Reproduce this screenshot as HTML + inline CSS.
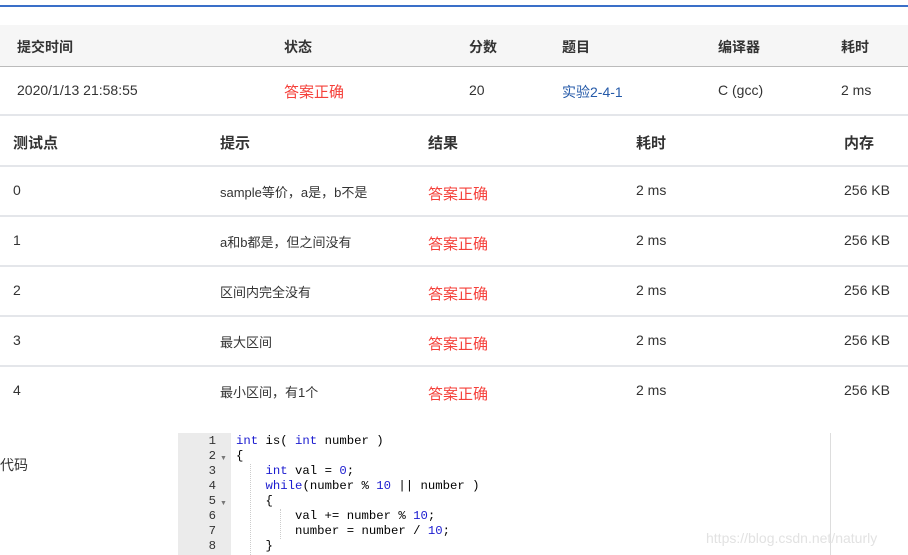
<!DOCTYPE html>
<html><head><meta charset="utf-8"><style>
body{margin:0;width:908px;height:555px;overflow:hidden;background:#fff;font-family:"Liberation Sans","Noto Sans CJK SC",sans-serif;color:#333;position:relative}
.a{position:absolute;white-space:nowrap}
.h{font-weight:bold;font-size:14px;color:#333}
.hl{position:absolute;left:0;width:908px;height:2px;background:#e4e6ea}
.r{color:#f5403a;font-size:15px}
.c{font-family:"Liberation Mono",monospace;font-size:12.3px;line-height:15px;white-space:pre}
.k{color:#1c1cd0}.n{color:#1c1cd0}
.g{position:absolute;width:0;border-left:1px dotted #ccc}
</style></head><body>
<div class="a" style="left:0;top:5px;width:908px;height:2px;background:#3a6fc8"></div>
<div class="a" style="left:0;top:25px;width:908px;height:41px;background:#f6f6f6;border-bottom:1px solid #bbb"></div>
<div class="a h" style="left:17px;top:37px">提交时间</div>
<div class="a h" style="left:284px;top:37px">状态</div>
<div class="a h" style="left:469px;top:37px">分数</div>
<div class="a h" style="left:562px;top:37px">题目</div>
<div class="a h" style="left:718px;top:37px">编译器</div>
<div class="a h" style="left:841px;top:37px">耗时</div>
<div class="a" style="left:17px;top:82px;font-size:14px">2020/1/13 21:58:55</div>
<div class="a r" style="left:284px;top:81px">答案正确</div>
<div class="a" style="left:469px;top:82px;font-size:14px">20</div>
<div class="a" style="left:562px;top:82px;font-size:14px;color:#2459a8">实验2-4-1</div>
<div class="a" style="left:718px;top:82px;font-size:14px">C (gcc)</div>
<div class="a" style="left:841px;top:82px;font-size:14px">2 ms</div>
<div class="hl" style="top:114px"></div>
<div class="a h" style="left:13px;top:132px;font-size:15px">测试点</div>
<div class="a h" style="left:220px;top:132px;font-size:15px">提示</div>
<div class="a h" style="left:428px;top:132px;font-size:15px">结果</div>
<div class="a h" style="left:636px;top:132px;font-size:15px">耗时</div>
<div class="a h" style="left:844px;top:132px;font-size:15px">内存</div>
<div class="hl" style="top:165px"></div>
<div class="hl" style="top:215px"></div>
<div class="hl" style="top:265px"></div>
<div class="hl" style="top:315px"></div>
<div class="hl" style="top:365px"></div>
<div class="a" style="left:13px;top:182px;font-size:14px">0</div><div class="a" style="left:220px;top:182px;font-size:13px">sample等价，a是，b不是</div><div class="a r" style="left:428px;top:183px">答案正确</div><div class="a" style="left:636px;top:182px;font-size:14px">2 ms</div><div class="a" style="left:844px;top:182px;font-size:14px">256 KB</div>
<div class="a" style="left:13px;top:232px;font-size:14px">1</div><div class="a" style="left:220px;top:232px;font-size:13px">a和b都是，但之间没有</div><div class="a r" style="left:428px;top:233px">答案正确</div><div class="a" style="left:636px;top:232px;font-size:14px">2 ms</div><div class="a" style="left:844px;top:232px;font-size:14px">256 KB</div>
<div class="a" style="left:13px;top:282px;font-size:14px">2</div><div class="a" style="left:220px;top:282px;font-size:13px">区间内完全没有</div><div class="a r" style="left:428px;top:283px">答案正确</div><div class="a" style="left:636px;top:282px;font-size:14px">2 ms</div><div class="a" style="left:844px;top:282px;font-size:14px">256 KB</div>
<div class="a" style="left:13px;top:332px;font-size:14px">3</div><div class="a" style="left:220px;top:332px;font-size:13px">最大区间</div><div class="a r" style="left:428px;top:333px">答案正确</div><div class="a" style="left:636px;top:332px;font-size:14px">2 ms</div><div class="a" style="left:844px;top:332px;font-size:14px">256 KB</div>
<div class="a" style="left:13px;top:382px;font-size:14px">4</div><div class="a" style="left:220px;top:382px;font-size:13px">最小区间，有1个</div><div class="a r" style="left:428px;top:383px">答案正确</div><div class="a" style="left:636px;top:382px;font-size:14px">2 ms</div><div class="a" style="left:844px;top:382px;font-size:14px">256 KB</div>
<div class="a" style="left:0;top:455px;font-size:14px">代码</div>
<div class="a" style="left:178px;top:433px;width:53px;height:122px;background:#ebebeb"></div>
<div class="a" style="left:830px;top:433px;width:1px;height:122px;background:#ddd"></div>
<div class="g" style="left:250px;top:464px;height:91px"></div>
<div class="g" style="left:280px;top:509px;height:30px"></div>
<div class="a c" style="left:178px;top:434px;width:38px;text-align:right;color:#333">1
2
3
4
5
6
7
8</div>
<div class="a" style="left:220px;top:436px;font-size:7px;color:#777;line-height:15px"><br>▼<br><br><br>▼</div>
<div class="a c" style="left:236px;top:434px;color:#000"><span class="k">int</span> is( <span class="k">int</span> number )
{
    <span class="k">int</span> val = <span class="n">0</span>;
    <span class="k">while</span>(number % <span class="n">10</span> || number )
    {
        val += number % <span class="n">10</span>;
        number = number / <span class="n">10</span>;
    }</div>
<div class="a" style="left:706px;top:530px;font-size:14px;color:#e2e2e2">https://blog.csdn.net/naturly</div>
</body></html>
